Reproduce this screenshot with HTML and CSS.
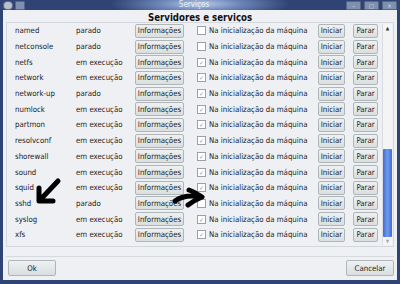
FILE: index.html
```html
<!DOCTYPE html>
<html lang="pt">
<head>
    <meta charset="UTF-8">
    <title>Serviços</title>
    <link rel="stylesheet" href="styles.css">
</head>
<body>
<div class="window">
    <div class="titlebar">
        <div class="tb-left">
            <span class="tb-btn round"></span>
            <span class="tb-btn"></span>
        </div>
        <div class="tb-title">Serviços</div>
        <div class="tb-right">
            <span class="tb-btn wide">&#8211;</span>
            <span class="tb-btn wide">&#9633;</span>
            <span class="tb-btn wide">&#215;</span>
        </div>
    </div>

    <div class="content">
        <h1 class="heading">Servidores e serviços</h1>

        <div class="list-box">
            <div class="rows" id="rows"></div>
            <div class="scrollbar">
                <div class="sb-arrow">&#9650;</div>
                <div class="sb-track"><div class="sb-thumb"></div></div>
                <div class="sb-arrow">&#9660;</div>
            </div>
        </div>

        <div class="separator"></div>

        <div class="footer">
            <button class="btn dialog-btn">Ok</button>
            <button class="btn dialog-btn">Cancelar</button>
        </div>

        <!-- hand drawn arrows on top of the screenshot -->
        <svg class="marks" width="400" height="284" viewBox="0 0 400 284">
            <path d="M58 181 L40 200 M39 188 L39 201 L53 201" stroke="#000" stroke-width="5" fill="none" stroke-linecap="round" stroke-linejoin="round"/>
            <path d="M175 201 C182 196 191 195 201 197 M189 190 C195 192 199 195 202 197 C197 199 192 202 188 205" stroke="#000" stroke-width="5" fill="none" stroke-linecap="round" stroke-linejoin="round"/>
        </svg>
    </div>
</div>

<script>
    // service name, status, starts at boot
    let services = [
        ['named', 'parado', false],
        ['netconsole', 'parado', false],
        ['netfs', 'em execução', true],
        ['network', 'em execução', true],
        ['network-up', 'parado', true],
        ['numlock', 'em execução', true],
        ['partmon', 'em execução', true],
        ['resolvconf', 'em execução', true],
        ['shorewall', 'em execução', true],
        ['sound', 'em execução', true],
        ['squid', 'em execução', true],
        ['sshd', 'parado', false],
        ['syslog', 'em execução', true],
        ['xfs', 'em execução', true]
    ];

    let rows = document.getElementById('rows');
    services.forEach(s => {
        let row = document.createElement('div');
        row.className = 'row';
        row.innerHTML = `
            <span class="name">${s[0]}</span>
            <span class="status">${s[1]}</span>
            <button class="btn info-btn">Informações</button>
            <span class="boot"><span class="check">${s[2] ? '&#10003;' : ''}</span>Na inicialização da máquina</span>
            <button class="btn small-btn start-btn">Iniciar</button>
            <button class="btn small-btn stop-btn">Parar</button>
        `;
        rows.appendChild(row);
    });
</script>
</body>
</html>
```

FILE: styles.css
```css
body {
    margin: 0;
    padding: 0;
    width: 400px;
    height: 284px;
    overflow: hidden;
    font-family: "DejaVu Sans Condensed", "DejaVu Sans", sans-serif;
    font-size: 7.8px;
    color: #1a1a1a;
}
.window {
    width: 400px;
    height: 284px;
    display: flex;
    flex-direction: column;
    background: #2f4374;
    box-sizing: border-box;
    padding: 0 3px 4px 3px;
}
.titlebar {
    height: 10px;
    display: flex;
    align-items: center;
    justify-content: space-between;
    background: radial-gradient(ellipse 90px 14px at 200px 4px, #b8cce8 0%, #6d86b8 45%, #2f4374 100%);
    margin: 0 -3px;
    padding: 0 3px;
}
.tb-title {
    color: #e8eef8;
    font-size: 8px;
    line-height: 10px;
}
.tb-left, .tb-right {
    display: flex;
    gap: 2px;
}
.tb-left {
    width: 40px;
}
.tb-right {
    width: 52px;
    justify-content: flex-end;
    gap: 3px;
}
.tb-btn {
    display: inline-block;
    width: 8px;
    height: 7px;
    background: #7f8fae;
    border: 1px solid #56658a;
    border-radius: 1px;
    color: #d8e0ee;
    font-size: 6px;
    line-height: 7px;
    text-align: center;
}
.tb-btn.round {
    border-radius: 4px;
    background: #b8c0cc;
}
.tb-btn.wide {
    width: 13px;
}
.content {
    position: relative;
    flex: 1;
    background: #eef0f4;
    display: flex;
    flex-direction: column;
}
.heading {
    margin: 0;
    height: 12px;
    font-size: 9.6px;
    font-weight: bold;
    text-align: center;
    line-height: 16px;
    color: #111;
}
.list-box {
    margin: 0 3px;
    height: 223px;
    border: 1px solid #d4d8de;
    display: flex;
    background: #eef0f4;
}
.rows {
    flex: 1;
}
.row {
    height: 15.7px;
    display: flex;
    align-items: center;
    white-space: nowrap;
}
.name {
    width: 61px;
    padding-left: 8px;
}
.status {
    width: 59px;
}
.btn {
    font-family: "DejaVu Sans Condensed", "DejaVu Sans", sans-serif;
    font-size: 7.8px;
    color: #1a1a1a;
    background: linear-gradient(#eef1f1, #d9dedf);
    border: 1px solid #b0b6b8;
    border-radius: 2px;
    padding: 0;
    margin: 0;
    white-space: nowrap;
}
.info-btn {
    width: 49px;
    height: 14px;
}
.boot {
    display: flex;
    align-items: center;
    margin-left: 13px;
    width: 121px;
}
.check {
    width: 7px;
    height: 7px;
    border: 1px solid #9aa0a6;
    background: #fff;
    margin-right: 3px;
    font-size: 6px;
    line-height: 7px;
    text-align: center;
    color: #888;
}
.small-btn {
    height: 14px;
}
.start-btn {
    width: 27px;
}
.stop-btn {
    width: 25px;
    margin-left: 8px;
}
.scrollbar {
    width: 9px;
    margin: 1px 1px 1px 0;
    display: flex;
    flex-direction: column;
    border-left: 1px solid #d8dce2;
}
.sb-arrow {
    height: 8px;
    font-size: 5px;
    line-height: 8px;
    text-align: center;
    color: #333;
    background: #f4f5f7;
}
.sb-arrow:last-child {
    color: #aaa;
}
.sb-track {
    flex: 1;
    display: flex;
    flex-direction: column;
    justify-content: flex-end;
    background: #f3f4f6;
}
.sb-thumb {
    height: 88px;
    background: linear-gradient(to right, #3f6fd6, #6f98ea, #3f6fd6);
    border-radius: 1px;
}
.separator {
    margin: 9px 3px 0 3px;
    border-top: 1px solid #d6d9de;
}
.footer {
    display: flex;
    justify-content: space-between;
    padding: 3px 3px 0 5px;
}
.dialog-btn {
    width: 48px;
    height: 16px;
}
.marks {
    position: absolute;
    left: -3px;
    top: -10px;
    pointer-events: none;
}
```
